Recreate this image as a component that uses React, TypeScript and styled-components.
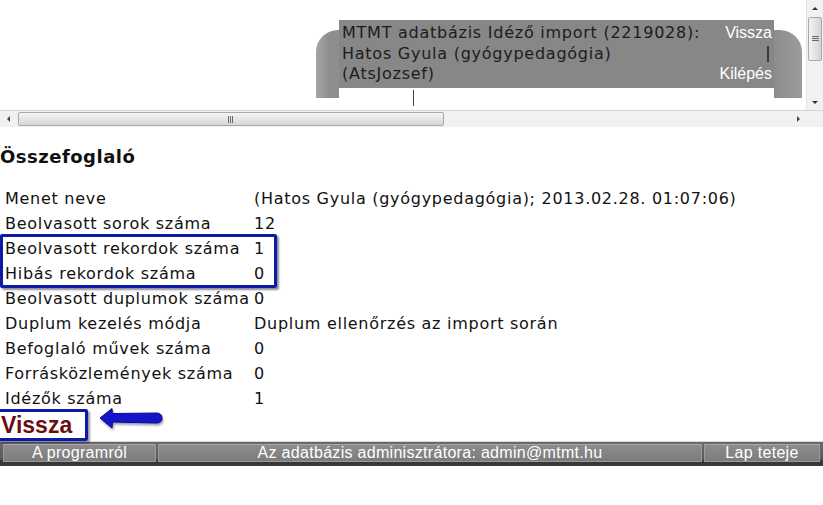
import React from "react";
import styled, { createGlobalStyle } from "styled-components";

const GlobalStyle = createGlobalStyle`
  html, body {
    margin: 0;
    padding: 0;
    background: #ffffff;
  }
  body {
    font-family: "DejaVu Sans", Verdana, sans-serif;
    color: #111111;
  }
`;

const Page = styled.div`
  width: 823px;
  height: 505px;
  overflow: hidden;
  background: #fff;
`;

/* ---- header frame with fake scrollbars ---- */

const Frame = styled.div`
  display: grid;
  grid-template-columns: 806px 17px;
  grid-template-rows: 110px 17px;
  width: 823px;
`;

const Viewport = styled.div`
  display: flex;
  padding: 30px 0 0 316px;
  overflow: hidden;
  background: #fff;
`;

const Tab = styled.div`
  display: flex;
  width: 486px;
  height: 68px;
  padding: 0 28px 0 23px;
  box-sizing: border-box;
  border-radius: 22px 22px 0 0;
  background: linear-gradient(90deg, #a4a4a4 0px, #8e8e8e 14px, #8c8c8c 94%, #9c9c9c 100%);
`;

const TabInner = styled.div`
  display: flex;
  flex-direction: column;
  width: 435px;
  margin-top: -10px;
`;

const TitlePanel = styled.div`
  display: flex;
  justify-content: space-between;
  height: 68px;
  padding: 3px 2px 0 3px;
  box-sizing: border-box;
  background: #878787;
`;

const TitleText = styled.div`
  font-family: "DejaVu Sans", Verdana, sans-serif;
  font-size: 16px;
  letter-spacing: 0.75px;
  line-height: 20.5px;
  color: #1c1c1c;
  white-space: nowrap;
`;

const TitleLinks = styled.div`
  display: flex;
  flex-direction: column;
  align-items: flex-end;
  font-family: "Liberation Sans", Arial, sans-serif;
  font-size: 16px;
  line-height: 20.5px;
  color: #ffffff;
`;

const Divider = styled.span`
  display: block;
  width: 2px;
  height: 16px;
  margin: 2px 3px 2px 0;
  background: #3b3b30;
`;

const TabGap = styled.div`
  height: 10px;
  background: #fff;
  padding-left: 74px;
  overflow: visible;
`;

const Caret = styled.span`
  display: block;
  width: 1px;
  height: 16px;
  margin-top: 2px;
  background: #3c4a3c;
`;

const VScroll = styled.div`
  display: flex;
  flex-direction: column;
  background: #f1f1f1;
  border-left: 1px solid #e4e4e4;
  box-sizing: border-box;
`;

const HScroll = styled.div`
  display: flex;
  align-items: center;
  background: #f1f1f1;
  border-top: 1px solid #d6d6d6;
  box-sizing: border-box;
`;

const ArrowBtn = styled.div<{ $dir: "up" | "down" | "left" | "right" }>`
  display: flex;
  align-items: center;
  justify-content: center;
  flex: 0 0 16px;
  width: 16px;
  height: 16px;
  &::after {
    content: "";
    width: 0;
    height: 0;
    border: 3px solid transparent;
    ${(p) =>
      p.$dir === "up"
        ? "border-bottom: 3px solid #333; border-top-width: 0;"
        : p.$dir === "down"
        ? "border-top: 3px solid #333; border-bottom-width: 0;"
        : p.$dir === "left"
        ? "border-right: 3px solid #444; border-left-width: 0;"
        : "border-left: 3px solid #444; border-right-width: 0;"}
  }
`;

const VThumb = styled.div`
  display: flex;
  align-items: center;
  justify-content: center;
  height: 42px;
  margin: 1px 1px 0 1px;
  border: 1px solid #a8a8a8;
  border-radius: 2px;
  background: linear-gradient(90deg, #f4f4f4, #e2e2e2 55%, #d4d4d4);
`;

const HThumb = styled.div`
  display: flex;
  align-items: center;
  justify-content: center;
  width: 426px;
  height: 14px;
  margin-left: 2px;
  border: 1px solid #a8a8a8;
  border-radius: 2px;
  box-sizing: border-box;
  background: linear-gradient(#f6f6f6, #e4e4e4 55%, #d6d6d6);
`;

const Grip = styled.span<{ $vertical?: boolean }>`
  display: block;
  width: ${(p) => (p.$vertical ? "7px" : "6px")};
  height: ${(p) => (p.$vertical ? "6px" : "7px")};
  background: ${(p) =>
    p.$vertical
      ? "repeating-linear-gradient(#6a6a6a 0 1px, transparent 1px 2px)"
      : "repeating-linear-gradient(90deg, #6a6a6a 0 1px, transparent 1px 2px)"};
`;

const Spacer = styled.div`
  flex: 1;
`;

const Corner = styled.div`
  background: #f1f1f1;
  border-top: 1px solid #d6d6d6;
`;

/* ---- summary ---- */

const Heading = styled.h2`
  margin: 20px 0 0 0;
  font-family: "DejaVu Sans", Verdana, sans-serif;
  font-size: 18px;
  letter-spacing: 0.5px;
  line-height: 20px;
  font-weight: bold;
  color: #111;
`;

const TableWrap = styled.div`
  position: relative;
  margin-top: 19px;
`;

const SummaryTable = styled.div`
  display: grid;
  grid-template-columns: 249px 1fr;
  grid-auto-rows: 25px;
  padding-left: 5px;
  font-family: "DejaVu Sans", Verdana, sans-serif;
  font-size: 16px;
  letter-spacing: 0.72px;
  line-height: 25px;
  color: #111;
`;

const Cell = styled.div`
  white-space: nowrap;
`;

const Highlight = styled.div<{ $top: number; $width: number; $height: number }>`
  position: absolute;
  left: 0;
  top: ${(p) => p.$top}px;
  width: ${(p) => p.$width}px;
  height: ${(p) => p.$height}px;
  box-sizing: border-box;
  border: 3px solid #0c1aa6;
  border-radius: 2px;
  box-shadow: 2px 2px 2px rgba(0, 0, 40, 0.45);
  pointer-events: none;
`;

const BackRow = styled.div`
  display: flex;
  align-items: center;
  height: 32px;
  margin-top: -2px;
`;

const BackBox = styled.div`
  display: flex;
  align-items: center;
  height: 32px;
  margin-left: -3px;
  padding: 0 13px 0 1px;
  box-sizing: border-box;
  border: 3px solid #0c1aa6;
  border-radius: 2px;
  box-shadow: 2px 2px 2px rgba(0, 0, 40, 0.4);
`;

const BackLink = styled.a`
  font-family: "Liberation Sans", Arial, sans-serif;
  font-weight: bold;
  font-size: 23px;
  color: #6c0d12;
  text-decoration: none;
`;

const ArrowIcon = styled.svg`
  margin-left: 10px;
  margin-top: -12px;
`;

/* ---- footer ---- */

const Footer = styled.div`
  display: flex;
  gap: 2px;
  height: 25px;
  padding: 2px 3px 5px 3px;
  box-sizing: border-box;
  border-top: 1px solid #d8d8d8;
  background: linear-gradient(#6a6a6a, #5a5a5a 70%, #353535 80%, #3a3a3a);
`;

const FooterButton = styled.div<{ $width?: number; $grow?: boolean }>`
  display: flex;
  align-items: center;
  justify-content: center;
  ${(p) => (p.$grow ? "flex: 1;" : `flex: 0 0 ${p.$width}px;`)}
  height: 18px;
  box-sizing: border-box;
  border: 1px solid #9a9a9a;
  border-top-color: #aaaaaa;
  background: linear-gradient(#8c8c8c, #7c7c7c);
  font-family: "Liberation Sans", Arial, sans-serif;
  font-size: 16px;
  letter-spacing: 0.3px;
  color: #ffffff;
  white-space: nowrap;
`;

const rows: [string, string][] = [
  ["Menet neve", "(Hatos Gyula (gyógypedagógia); 2013.02.28. 01:07:06)"],
  ["Beolvasott sorok száma", "12"],
  ["Beolvasott rekordok száma", "1"],
  ["Hibás rekordok száma", "0"],
  ["Beolvasott duplumok száma", "0"],
  ["Duplum kezelés módja", "Duplum ellenőrzés az import során"],
  ["Befoglaló művek száma", "0"],
  ["Forrásközlemények száma", "0"],
  ["Idézők száma", "1"],
];

export default function App() {
  return (
    <Page>
      <GlobalStyle />
      <Frame>
        <Viewport>
          <Tab>
            <TabInner>
              <TitlePanel>
                <TitleText>
                  MTMT adatbázis Idéző import (2219028):
                  <br />
                  Hatos Gyula (gyógypedagógia)
                  <br />
                  (AtsJozsef)
                </TitleText>
                <TitleLinks>
                  <span>Vissza</span>
                  <Divider />
                  <span>Kilépés</span>
                </TitleLinks>
              </TitlePanel>
              <TabGap>
                <Caret />
              </TabGap>
            </TabInner>
          </Tab>
        </Viewport>
        <VScroll>
          <ArrowBtn $dir="up" />
          <VThumb>
            <Grip $vertical />
          </VThumb>
          <Spacer />
          <ArrowBtn $dir="down" />
        </VScroll>
        <HScroll>
          <ArrowBtn $dir="left" />
          <HThumb>
            <Grip />
          </HThumb>
          <Spacer />
          <ArrowBtn $dir="right" />
        </HScroll>
        <Corner />
      </Frame>

      <Heading>Összefoglaló</Heading>

      <TableWrap>
        <SummaryTable>
          {rows.map(([label, value]) => (
            <React.Fragment key={label}>
              <Cell>{label}</Cell>
              <Cell>{value}</Cell>
            </React.Fragment>
          ))}
        </SummaryTable>
        <Highlight $top={48} $width={277} $height={54} />
      </TableWrap>

      <BackRow>
        <BackBox>
          <BackLink href="#">Vissza</BackLink>
        </BackBox>
        <ArrowIcon width="66" height="24" viewBox="0 0 66 24">
          <path
            d="M2 11 L14 1.5 L14.5 6.5 L59 6 Q64 6.5 64 11 Q64 15.5 59 16 L14.5 15 L14 21 Z"
            fill="#1414c8"
            stroke="#0a0a90"
            strokeWidth="1"
            strokeLinejoin="round"
            style={{ filter: "drop-shadow(1px 2px 1px rgba(0,0,60,0.4))" }}
          />
        </ArrowIcon>
      </BackRow>

      <Footer>
        <FooterButton $width={153}>A programról</FooterButton>
        <FooterButton $grow>Az adatbázis adminisztrátora: admin@mtmt.hu</FooterButton>
        <FooterButton $width={116}>Lap teteje</FooterButton>
      </Footer>
    </Page>
  );
}
